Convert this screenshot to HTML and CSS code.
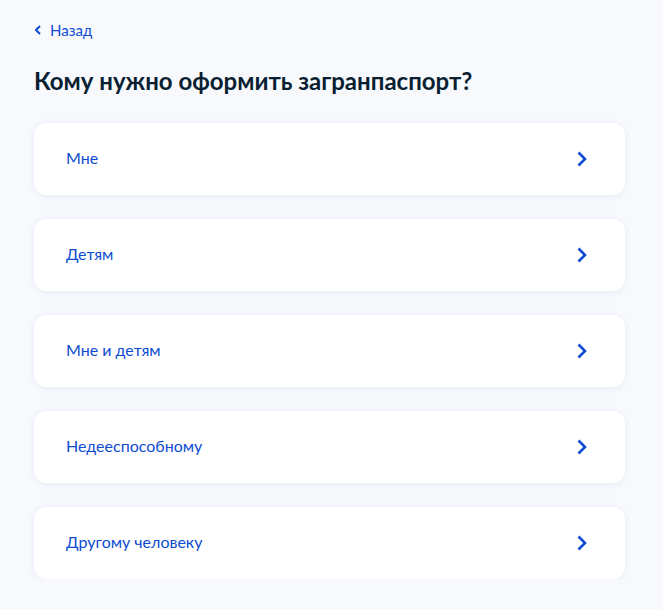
FILE: index.html
```html
<!DOCTYPE html>
<html lang="ru">
<head>
    <meta charset="UTF-8">
    <meta name="viewport" content="width=device-width, initial-scale=1.0">
    <title>Загранпаспорт</title>
    <link rel="stylesheet" href="styles.css">
</head>
<body>
    <main class="page">
        <!-- Ссылка назад -->
        <a class="back" href="#">
            <svg class="back-icon" width="8" height="10" viewBox="0 0 8 10"><path d="M6 1 L2 5 L6 9" fill="none" stroke="#0d4cd3" stroke-width="2"/></svg>
            Назад
        </a>

        <h1 class="title">Кому нужно оформить загранпаспорт?</h1>

        <!-- Варианты ответа -->
        <div class="options">
            <a class="option" href="#"><span class="option-label">Мне</span><svg class="chevron" width="10" height="16" viewBox="0 0 10 16"><path d="M1.5 1.5 L8 8 L1.5 14.5" fill="none" stroke="#0d4cd3" stroke-width="2.6"/></svg></a>
            <a class="option" href="#"><span class="option-label">Детям</span><svg class="chevron" width="10" height="16" viewBox="0 0 10 16"><path d="M1.5 1.5 L8 8 L1.5 14.5" fill="none" stroke="#0d4cd3" stroke-width="2.6"/></svg></a>
            <a class="option" href="#"><span class="option-label">Мне и детям</span><svg class="chevron" width="10" height="16" viewBox="0 0 10 16"><path d="M1.5 1.5 L8 8 L1.5 14.5" fill="none" stroke="#0d4cd3" stroke-width="2.6"/></svg></a>
            <a class="option" href="#"><span class="option-label">Недееспособному</span><svg class="chevron" width="10" height="16" viewBox="0 0 10 16"><path d="M1.5 1.5 L8 8 L1.5 14.5" fill="none" stroke="#0d4cd3" stroke-width="2.6"/></svg></a>
            <a class="option" href="#"><span class="option-label">Другому человеку</span><svg class="chevron" width="10" height="16" viewBox="0 0 10 16"><path d="M1.5 1.5 L8 8 L1.5 14.5" fill="none" stroke="#0d4cd3" stroke-width="2.6"/></svg></a>
        </div>
    </main>
</body>
</html>
```

FILE: styles.css
```css
body {
    font-family: Lato, "Open Sans", Arial, sans-serif;
    background-color: #f7f9fd;
    margin: 0;
    padding: 0;
}

.page {
    width: 591px;
    padding: 19px 0 0 34px;
}

.back {
    display: flex;
    align-items: center;
    gap: 8px;
    color: #0d4cd3;
    text-decoration: none;
    font-size: 15px;
    line-height: 22px;
}

.title {
    margin: 24px 0 26px;
    font-size: 24px;
    line-height: 32px;
    font-weight: bold;
    color: #0b1f33;
}

.options {
    display: flex;
    flex-direction: column;
    gap: 24px;
}

.option {
    display: flex;
    justify-content: space-between;
    align-items: center;
    height: 72px;
    padding: 0 38px 0 32px;
    background: white;
    border-radius: 12px;
    box-shadow: 0 1px 6px rgba(26, 58, 130, 0.08);
    color: #0d4cd3;
    text-decoration: none;
    font-size: 16px;
}

.option-label {
    margin-bottom: 3px;
}
```
